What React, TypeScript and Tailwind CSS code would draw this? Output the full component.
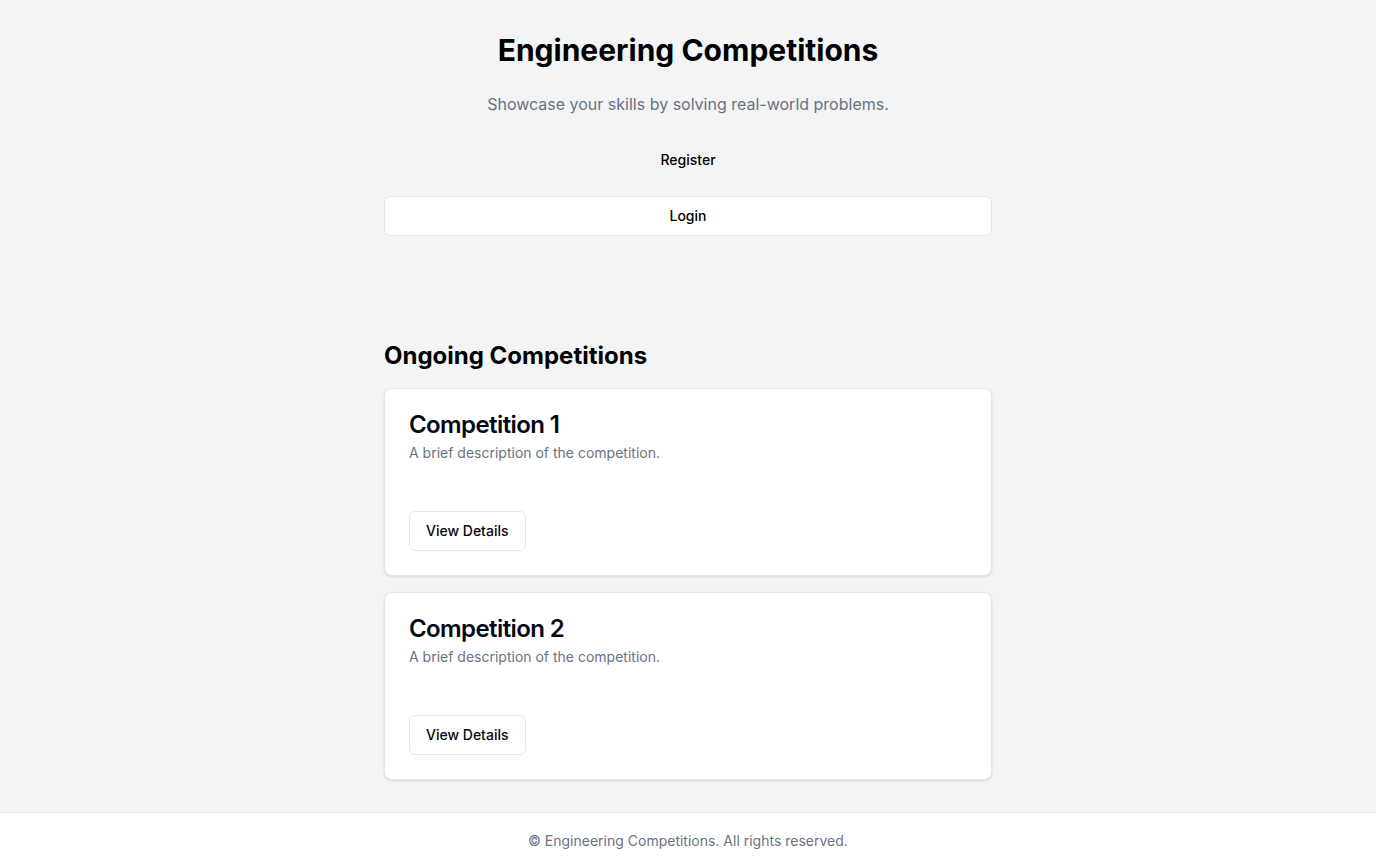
import React from "react";

function Card({ title }: { title: string }) {
  return (
    <div className="rounded-lg border border-gray-200 bg-white shadow-sm">
      <div className="flex flex-col gap-1.5 p-6">
        <h3 className="text-2xl font-semibold leading-none tracking-tight text-gray-950">{title}</h3>
        <p className="text-sm text-gray-500">A brief description of the competition.</p>
      </div>
      <div className="p-6 pt-0"></div>
      <div className="flex items-center p-6 pt-0">
        <button className="inline-flex h-10 items-center justify-center rounded-md border border-gray-200 bg-white px-4 py-2 text-sm font-medium text-gray-950">
          View Details
        </button>
      </div>
    </div>
  );
}

export default function App() {
  return (
    <div
      className="flex min-h-screen flex-col bg-gray-100 text-gray-950"
      style={{ fontFamily: "Inter, 'Noto Sans', sans-serif" }}
    >
      <div className="mx-auto w-full max-w-2xl flex-1 px-8 pb-8">
        <header className="pt-8 text-center">
          <h1 className="text-3xl font-bold text-black">Engineering Competitions</h1>
          <p className="mt-6 text-base text-gray-500">Showcase your skills by solving real-world problems.</p>
          <div className="mt-6 flex flex-col gap-4">
            <button className="mx-auto inline-flex h-10 items-center justify-center rounded-md px-4 py-2 text-sm font-medium text-black">
              Register
            </button>
            <button className="inline-flex h-10 w-full items-center justify-center rounded-md border border-gray-200 bg-white px-4 py-2 text-sm font-medium text-black">
              Login
            </button>
          </div>
        </header>
        <section className="mt-[104px]">
          <h2 className="mb-4 text-2xl font-bold text-black">Ongoing Competitions</h2>
          <div className="flex flex-col gap-4">
            <Card title="Competition 1" />
            <Card title="Competition 2" />
          </div>
        </section>
      </div>
      <footer className="flex h-[56px] items-center justify-center border-t border-gray-200 bg-white text-sm text-gray-500">
        © Engineering Competitions. All rights reserved.
      </footer>
    </div>
  );
}
